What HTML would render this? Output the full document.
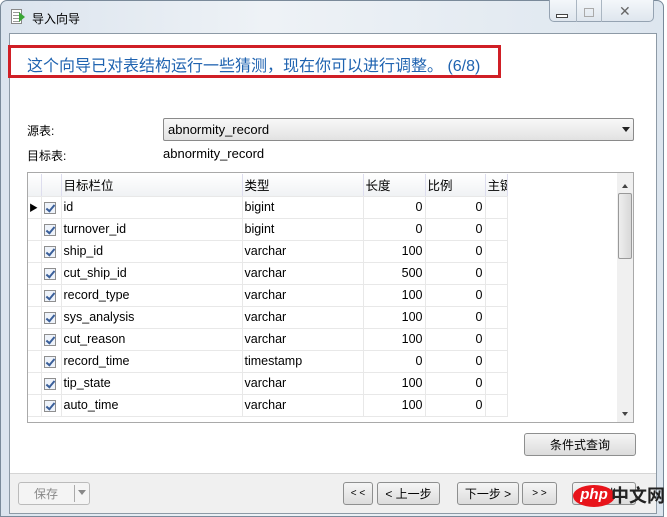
<!DOCTYPE html>
<html><head><meta charset="utf-8"><style>
*{margin:0;padding:0;box-sizing:border-box}
body{width:667px;height:517px;overflow:hidden;background:#fff;font-family:"Liberation Sans","Noto Sans CJK SC",sans-serif;font-size:12px;color:#000;position:relative}
.abs{position:absolute}
#frame{left:0;top:0;width:664px;height:517px;background:linear-gradient(90deg,#dbe4ee,#eef2f6 40%,#dde6ef);border:1px solid #7a8a9a;border-radius:7px 7px 0 0}
#inner{left:9px;top:33px;width:648px;height:481px;background:#fff;border:1px solid #8d9aa6}
#bottom{left:10px;top:473px;width:646px;height:40px;background:#f0f0f0;border-top:1px solid #d5d5d5}
.btn{position:absolute;border:1px solid #8e8f8f;border-radius:3px;background:linear-gradient(#f5f5f5,#dcdcdc);text-align:center;font-size:12px;line-height:22px;color:#000}
table{border-collapse:collapse;position:absolute;left:28px;top:174px;font-size:12.5px;table-layout:fixed;width:479px}
td{height:22px;border-right:1px solid #e8e8e8;border-bottom:1px solid #e8e8e8;padding:0 2px;white-space:nowrap;overflow:hidden}
tr.h td{background:linear-gradient(#fff,#f0f2f4);border-right:1px solid #dde;height:22px}
.r{text-align:right}
.cb{display:inline-block;width:12px;height:12px;border:1px solid #8f8f8f;background:#eef3fa;vertical-align:middle;position:relative}
.cb:after{content:"";position:absolute;left:3px;top:0px;width:3px;height:7px;border:solid #3a5f9a;border-width:0 2px 2px 0;transform:rotate(40deg)}
</style></head><body>
<div id="frame" class="abs"></div>
<div class="abs" style="left:11px;top:9px;width:11px;height:15px;background:#fff;border:1px solid #888"></div>
<div class="abs" style="left:13px;top:12px;width:7px;height:1px;background:#999;box-shadow:0 3px #999,0 6px #999,0 9px #999"></div>
<div class="abs" style="left:19px;top:12px;width:0;height:0;border:5px solid transparent;border-left:6px solid #3aa635"></div>
<div class="abs" style="left:32px;top:10px;font-size:12px">导入向导</div>
<div class="abs" style="left:549px;top:0;width:105px;height:22px;border:1px solid #95a3b2;border-top:none;border-radius:0 0 5px 5px;background:linear-gradient(#f4f7fa,#dfe6ee)"></div>
<div class="abs" style="left:576px;top:0;width:1px;height:22px;background:#aab6c2"></div>
<div class="abs" style="left:601px;top:0;width:1px;height:22px;background:#aab6c2"></div>
<div class="abs" style="left:556px;top:14px;width:12px;height:4px;border:1px solid #444;background:#fff"></div>
<div class="abs" style="left:584px;top:8px;width:10px;height:9px;border:1px solid #aaa"></div>
<div class="abs" style="left:619px;top:3px;font-size:14px;color:#666">✕</div>
<div id="inner" class="abs"></div>
<div class="abs" style="left:8px;top:45px;width:493px;height:33px;border:3px solid #d01f26"></div>
<div class="abs" style="left:27px;top:52px;font-size:16px;color:#1f63b0">这个向导已对表结构运行一些猜测，现在你可以进行调整。 (6/8)</div>
<div class="abs" style="left:27px;top:122px">源表:</div>
<div class="abs" style="left:163px;top:118px;width:471px;height:23px;border:1px solid #8a8a8a;border-radius:2px;background:linear-gradient(#f8f8f8,#e2e2e2);padding:3px 4px;font-size:13px">abnormity_record</div>
<div class="abs" style="left:622px;top:127px;border:4px solid transparent;border-top:5px solid #222"></div>
<div class="abs" style="left:27px;top:147px">目标表:</div>
<div class="abs" style="left:163px;top:146px;font-size:13px">abnormity_record</div>
<div class="abs" style="left:27px;top:172px;width:607px;height:251px;border:1px solid #a9a9a9;background:#fff"></div>
<table>
<colgroup><col style="width:13px"><col style="width:20px"><col style="width:181px"><col style="width:121px"><col style="width:62px"><col style="width:60px"><col style="width:22px"></colgroup>
<tr class="h"><td></td><td></td><td>目标栏位</td><td>类型</td><td>长度</td><td>比例</td><td style="text-overflow:clip">主键</td></tr>
<tr><td style="padding:0 1px;font-size:9px">▶</td><td><span class="cb"></span></td><td>id</td><td>bigint</td><td class="r">0</td><td class="r">0</td><td></td></tr>
<tr><td></td><td><span class="cb"></span></td><td>turnover_id</td><td>bigint</td><td class="r">0</td><td class="r">0</td><td></td></tr>
<tr><td></td><td><span class="cb"></span></td><td>ship_id</td><td>varchar</td><td class="r">100</td><td class="r">0</td><td></td></tr>
<tr><td></td><td><span class="cb"></span></td><td>cut_ship_id</td><td>varchar</td><td class="r">500</td><td class="r">0</td><td></td></tr>
<tr><td></td><td><span class="cb"></span></td><td>record_type</td><td>varchar</td><td class="r">100</td><td class="r">0</td><td></td></tr>
<tr><td></td><td><span class="cb"></span></td><td>sys_analysis</td><td>varchar</td><td class="r">100</td><td class="r">0</td><td></td></tr>
<tr><td></td><td><span class="cb"></span></td><td>cut_reason</td><td>varchar</td><td class="r">100</td><td class="r">0</td><td></td></tr>
<tr><td></td><td><span class="cb"></span></td><td>record_time</td><td>timestamp</td><td class="r">0</td><td class="r">0</td><td></td></tr>
<tr><td></td><td><span class="cb"></span></td><td>tip_state</td><td>varchar</td><td class="r">100</td><td class="r">0</td><td></td></tr>
<tr><td></td><td><span class="cb"></span></td><td>auto_time</td><td>varchar</td><td class="r">100</td><td class="r">0</td><td></td></tr>
</table>
<div class="abs" style="left:617px;top:173px;width:16px;height:249px;background:#f0f0f0"></div>
<div class="abs" style="left:622px;top:181px;border:3px solid transparent;border-bottom:4px solid #444"></div>
<div class="abs" style="left:618px;top:193px;width:14px;height:66px;border:1px solid #999;border-radius:2px;background:linear-gradient(90deg,#eee,#d8d8d8)"></div>
<div class="abs" style="left:622px;top:412px;border:3px solid transparent;border-top:4px solid #444"></div>
<div class="btn" style="left:524px;top:433px;width:112px;height:23px">条件式查询</div>
<div id="bottom" class="abs"></div>
<div class="btn" style="left:18px;top:482px;width:72px;height:23px;color:#888;border-color:#bbb;background:#f4f4f4;text-align:left;padding-left:15px">保存</div>
<div class="abs" style="left:74px;top:485px;width:1px;height:17px;background:#aaa"></div>
<div class="abs" style="left:78px;top:490px;border:4px solid transparent;border-top:5px solid #888"></div>
<div class="btn" style="left:343px;top:482px;width:30px;height:23px;font-size:10px">&lt; &lt;</div>
<div class="btn" style="left:377px;top:482px;width:63px;height:23px">&lt; 上一步</div>
<div class="btn" style="left:457px;top:482px;width:62px;height:23px">下一步 &gt;</div>
<div class="btn" style="left:522px;top:482px;width:35px;height:23px;font-size:10px">&gt; &gt;</div>
<div class="btn" style="left:572px;top:482px;width:64px;height:23px">取消</div>
<div class="abs" style="left:573px;top:485px;width:42px;height:22px;border-radius:50%;background:#e8141b;color:#fff;font-size:15px;font-weight:bold;text-align:center;line-height:20px;font-style:italic">php</div>
<div class="abs" style="left:611px;top:485px;font-size:18px;color:#222;font-weight:bold;line-height:22px">中文网</div>
</body></html>
